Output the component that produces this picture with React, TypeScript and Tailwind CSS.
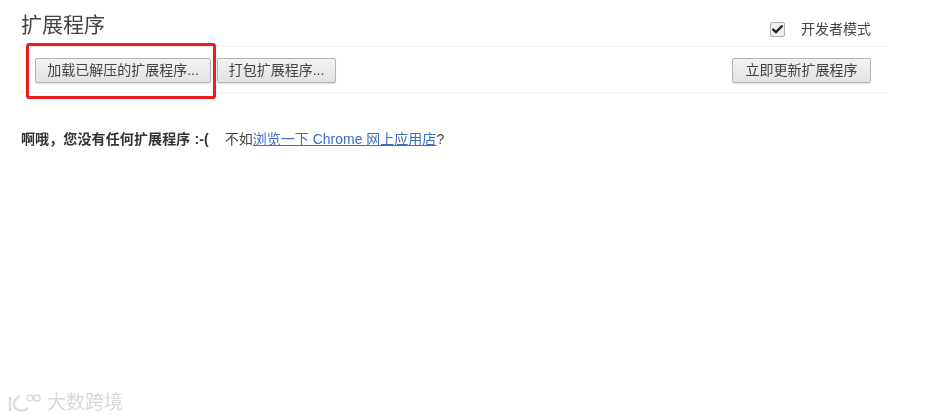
import { Check } from 'lucide-react';

const font = '[font-family:"Liberation_Sans","Noto_Sans_CJK_SC",sans-serif]';

function ActionButton({ label, className }: { label: string; className: string }) {
  return (
    <button className={`flex h-[25px] items-center justify-center rounded-[2px] border border-[#b4b4b4] bg-gradient-to-b from-[#f3f3f3] to-[#e2e2e2] text-[14px] text-[#444] shadow-[0_1px_1px_rgba(0,0,0,0.12)] ${className}`}>
      {label}
    </button>
  );
}

export default function App() {
  return (
    <div className={`relative h-[420px] w-[939px] overflow-hidden bg-white blur-[0.4px] ${font}`}>
      <div className="w-[886px] pl-[21px] pt-[10px]">
        <header className="flex h-[37px] items-center justify-between border-b border-[#eeeeee] pb-[7px]">
          <h1 className="text-[21px] font-normal leading-[26px] text-[#444]">扩展程序</h1>
          <label className="mr-[15px] mt-[10px] flex items-center gap-[16px] text-[14px] text-[#444]">
            <span className="flex h-[15px] w-[15px] items-center justify-center rounded-[2px] border border-[#b0b0b0] bg-[#eeeeee]">
              <Check size={13} strokeWidth={4.5} className="text-[#222]" />
            </span>
            开发者模式
          </label>
        </header>
        <div className="flex h-[46px] items-center justify-between border-b border-[#eeeeee] pl-[14px] pr-[15px] pt-[2px]">
          <div className="flex gap-[6px]">
            <ActionButton label="加载已解压的扩展程序..." className="w-[176px]" />
            <ActionButton label="打包扩展程序..." className="w-[119px]" />
          </div>
          <ActionButton label="立即更新扩展程序" className="w-[139px]" />
        </div>
        <p className="mt-[37px] flex text-[14px] leading-[18px] text-[#444]">
          <strong className="font-bold tracking-[0.12px] text-[#333]">啊哦，您没有任何扩展程序 :-(</strong>
          <span className="ml-[16px]">
            不如<a className="text-[#3b6cc4] underline">浏览一下 Chrome 网上应用店</a>?
          </span>
        </p>
      </div>

      <div className="absolute left-[26px] top-[43px] h-[56px] w-[190px] rounded-[3px] border-[3px] border-[#ee1c1c]" />

      <div className="absolute left-[8px] top-[389px] flex items-center gap-[5px] text-[#dcdcdc]">
        <svg width="34" height="24" viewBox="0 0 34 24" fill="none" stroke="currentColor">
          <path d="M2 6v14" strokeWidth="2.5" />
          <path d="M12 5C7 8 5 11 6 14c1 5 8 8 14 3" strokeWidth="2.5" />
          <circle cx="22" cy="7" r="3" strokeWidth="1.5" />
          <circle cx="29" cy="7" r="3" strokeWidth="1.5" />
        </svg>
        <span className="text-[19px] leading-[28px] text-[#d8d8d8]">大数跨境</span>
      </div>
    </div>
  );
}
